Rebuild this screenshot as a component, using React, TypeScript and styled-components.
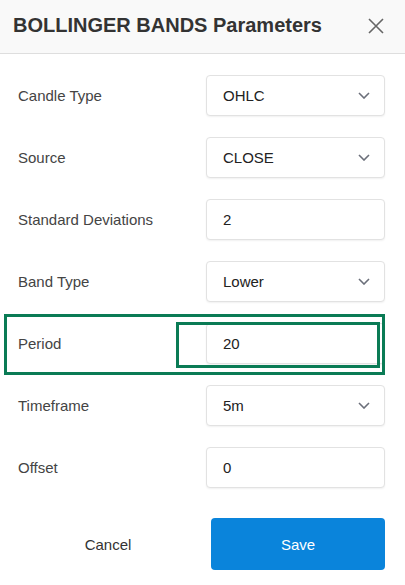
import styled, { createGlobalStyle } from 'styled-components'

const GlobalStyle = createGlobalStyle`
  html, body {
    margin: 0;
    padding: 0;
    background: #ffffff;
  }
  body {
    font-family: 'Liberation Sans', Arial, sans-serif;
  }
`

const Dialog = styled.div`
  width: 405px;
  height: 585px;
  background: #fff;
  position: relative;
  display: flex;
  flex-direction: column;
`

const Header = styled.div`
  height: 54px;
  box-sizing: border-box;
  background: #f9f9f9;
  border-bottom: 1px solid #dedede;
  display: flex;
  align-items: center;
  justify-content: space-between;
  padding: 0 21px 0 13px;
  h1 {
    margin: 0;
    font-size: 20px;
    font-weight: bold;
    color: #333;
    padding-bottom: 2px;
  }
`

const CloseBtn = styled.button`
  border: 0;
  background: none;
  padding: 0;
  width: 16px;
  height: 16px;
  display: flex;
  cursor: pointer;
  margin-bottom: 1px;
`

const Form = styled.div`
  display: flex;
  flex-direction: column;
  gap: 21px;
  padding: 21px 20px 0 18px;
`

const Row = styled.div`
  display: flex;
  align-items: center;
  justify-content: space-between;
  height: 41px;
`

const Label = styled.span`
  font-size: 15px;
  color: #444;
`

const Field = styled.div<{ select?: boolean }>`
  width: 179px;
  height: 41px;
  box-sizing: border-box;
  border: 1px solid #e2e2e2;
  border-radius: 4px;
  box-shadow: 0 1px 2px rgba(0, 0, 0, 0.06);
  display: flex;
  align-items: center;
  justify-content: space-between;
  padding: 0 14px 0 16px;
  font-size: 15px;
  color: #222;
  background: #fff;
`

const Footer = styled.div`
  display: flex;
  align-items: center;
  padding: 30px 20px 0 0;
`

const CancelBtn = styled.button`
  flex: 1;
  border: 0;
  background: none;
  font-family: inherit;
  font-size: 15px;
  color: #333;
  padding: 0 0 0 5px;
  height: 52px;
`

const SaveBtn = styled.button`
  width: 174px;
  height: 52px;
  border: 0;
  border-radius: 4px;
  background: #0a84db;
  color: #fff;
  font-family: inherit;
  font-size: 15px;
`

const Highlight = styled.div<{ x: number; y: number; w: number; h: number }>`
  position: absolute;
  left: ${({ x }) => x}px;
  top: ${({ y }) => y}px;
  width: ${({ w }) => w}px;
  height: ${({ h }) => h}px;
  box-sizing: border-box;
  border: 3px solid #0a7b55;
  pointer-events: none;
`

const Chevron = () => (
  <svg width="12" height="7" viewBox="0 0 12 7">
    <path d="M1 1l5 5 5-5" fill="none" stroke="#6b6f7a" strokeWidth="1.6" />
  </svg>
)

const rows: { label: string; value: string; select?: boolean }[] = [
  { label: 'Candle Type', value: 'OHLC', select: true },
  { label: 'Source', value: 'CLOSE', select: true },
  { label: 'Standard Deviations', value: '2' },
  { label: 'Band Type', value: 'Lower', select: true },
  { label: 'Period', value: '20' },
  { label: 'Timeframe', value: '5m', select: true },
  { label: 'Offset', value: '0' },
]

export default function App() {
  return (
    <Dialog>
      <GlobalStyle />
      <Header>
        <h1>BOLLINGER BANDS Parameters</h1>
        <CloseBtn>
          <svg width="16" height="16" viewBox="0 0 16 16">
            <path d="M1 1l14 14M15 1L1 15" stroke="#666" strokeWidth="1.6" />
          </svg>
        </CloseBtn>
      </Header>
      <Form>
        {rows.map((r) => (
          <Row key={r.label}>
            <Label>{r.label}</Label>
            <Field select={r.select}>
              <span>{r.value}</span>
              {r.select && <Chevron />}
            </Field>
          </Row>
        ))}
      </Form>
      <Footer>
        <CancelBtn>Cancel</CancelBtn>
        <SaveBtn>Save</SaveBtn>
      </Footer>
      <Highlight x={4} y={314} w={381} h={61} />
      <Highlight x={176} y={322} w={204} h={46} />
    </Dialog>
  )
}
